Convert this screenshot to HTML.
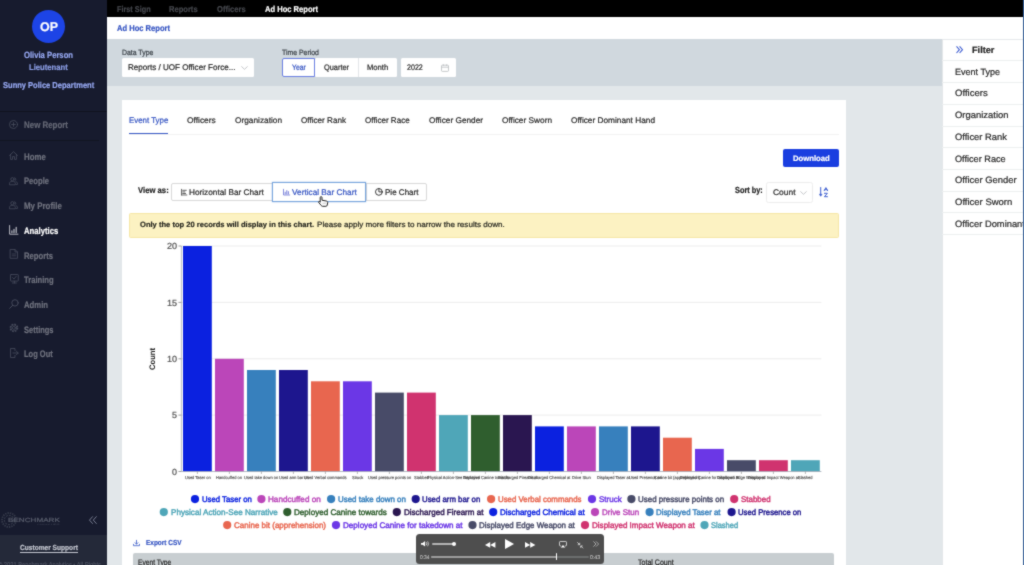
<!DOCTYPE html>
<html>
<head>
<meta charset="utf-8">
<title>Ad Hoc Report</title>
<style>
*{box-sizing:border-box;margin:0;padding:0}
html,body{width:1024px;height:565px;overflow:hidden}
body{position:relative;background:#e2e7ea;font-family:"Liberation Sans",sans-serif;font-size:8px;color:#222}
.t{position:absolute;white-space:nowrap;line-height:1;transform-origin:0 0;display:block}
.b{position:absolute}
svg{position:absolute;overflow:visible}
#side{position:absolute;left:0;top:0;width:107px;height:565px;background:#171b2e;overflow:hidden}
#top{position:absolute;left:107px;top:0;width:917px;height:17px;background:#000}
#hdr{position:absolute;left:107px;top:17px;width:917px;height:22px;background:#fff}
#band{position:absolute;left:107px;top:39px;width:835px;height:46.5px;background:#d0d8de}
#card{position:absolute;left:122px;top:100px;width:724px;height:465px;background:#fff;overflow:hidden}
#right{position:absolute;left:942px;top:39px;width:82px;height:526px;background:#fff;overflow:hidden}
#player{position:absolute;left:416px;top:534px;width:188px;height:30px;background:#4e4e4e;border-radius:3.5px;overflow:hidden}
#app{position:absolute;left:0;top:0;width:1024px;height:565px;overflow:hidden;filter:url(#soft);background:#e2e7ea}
#edge{position:absolute;left:1022.8px;top:0;width:1.2px;height:565px;background:#3f669a}
.btn{position:absolute;background:#fff;border:1px solid #d9d9d9}
</style>
</head>
<body>
<svg width="0" height="0" style="position:absolute"><defs><filter id="soft" x="0" y="0" width="100%" height="100%" color-interpolation-filters="sRGB"><feConvolveMatrix order="3" kernelMatrix="0.03 0.085 0.03 0.085 0.54 0.085 0.03 0.085 0.03" divisor="1" edgeMode="duplicate" preserveAlpha="true"/></filter></defs></svg>
<div id="app">
<!-- ============ SIDEBAR ============ -->
<nav id="side">
<div class="b" style="left:32px;top:9.5px;width:33px;height:33px;border-radius:50%;background:#1d44e6"></div>
<div class="b" style="left:0;top:111px;width:107px;height:1px;background:#10131f"></div>
<div class="b" style="left:0;top:140.2px;width:99px;height:1px;background:#111522"></div>
<div class="b" style="left:0;top:534.5px;width:107px;height:31px;background:#242939"></div>
<div class="b" style="left:19.8px;top:552.3px;width:57.9px;height:.8px;background:#c3c6cf"></div>
<svg style="left:9.2px;top:119.8px" width="9" height="9" viewBox="0 0 9 9"><circle cx="4.5" cy="4.5" r="4" fill="none" stroke="#474c5d" stroke-width="0.8" stroke-linecap="round" stroke-linejoin="round"/><path d="M4.5 2.6v3.8M2.6 4.5h3.8" fill="none" stroke="#474c5d" stroke-width="0.8" stroke-linecap="round" stroke-linejoin="round"/></svg>
<svg style="left:9.4px;top:151px" width="9" height="9" viewBox="0 0 9 9"><path d="M.6 4.4 4.5.7 8.4 4.4M1.6 3.6V8.4H3.5V5.6H5.5V8.4H7.4V3.6" fill="none" stroke="#474c5d" stroke-width="0.8" stroke-linecap="round" stroke-linejoin="round"/></svg>
<svg style="left:9.4px;top:176.6px" width="9" height="8" viewBox="0 0 9 8"><circle cx="3.4" cy="2.2" r="1.6" fill="none" stroke="#474c5d" stroke-width="0.8" stroke-linecap="round" stroke-linejoin="round"/><path d="M.5 7.4V6.3C.5 5 1.6 4.5 3.4 4.5S6.3 5 6.3 6.3V7.4Z" fill="none" stroke="#474c5d" stroke-width="0.8" stroke-linecap="round" stroke-linejoin="round"/><path d="M5.6.8A1.6 1.6 0 0 1 5.9 3.8M7 4.8C8 5 8.5 5.5 8.5 6.4V7.4H7.2" fill="none" stroke="#474c5d" stroke-width="0.8" stroke-linecap="round" stroke-linejoin="round"/></svg>
<svg style="left:9.4px;top:201.2px" width="9" height="8" viewBox="0 0 9 8"><circle cx="3.4" cy="2.2" r="1.6" fill="none" stroke="#474c5d" stroke-width="0.8" stroke-linecap="round" stroke-linejoin="round"/><path d="M.5 7.4V6.3C.5 5 1.6 4.5 3.4 4.5S6.3 5 6.3 6.3V7.4Z" fill="none" stroke="#474c5d" stroke-width="0.8" stroke-linecap="round" stroke-linejoin="round"/><path d="M5.6.8A1.6 1.6 0 0 1 5.9 3.8M7 4.8C8 5 8.5 5.5 8.5 6.4V7.4H7.2" fill="none" stroke="#474c5d" stroke-width="0.8" stroke-linecap="round" stroke-linejoin="round"/></svg>
<svg style="left:9.3px;top:224.6px" width="9.4" height="9.8" viewBox="0 0 9.4 9.8"><path d="M.6.5V9.2H9" fill="none" stroke="#c9cbd2" stroke-width="0.9" stroke-linecap="round" stroke-linejoin="round"/><path d="M2.9 7.6V5.9M5 7.6V4.2M7.2 7.6V2.2" fill="none" stroke="#c9cbd2" stroke-width="1.1" stroke-linecap="round" stroke-linejoin="round"/></svg>
<svg style="left:9.9px;top:249.2px" width="8" height="9.8" viewBox="0 0 8 9.8"><path d="M.5.5H5L7.5 3V9.3H.5Z M5 .5V3H7.5" fill="none" stroke="#474c5d" stroke-width="0.8" stroke-linecap="round" stroke-linejoin="round"/><path d="M2.2 5h3.6M2.2 6.8h3.6" fill="none" stroke="#474c5d" stroke-width="0.7" stroke-linecap="round" stroke-linejoin="round"/></svg>
<svg style="left:9.6px;top:274.4px" width="8.8" height="9.4" viewBox="0 0 8.8 9.4"><rect x=".5" y=".5" width="7.8" height="6.6" rx=".6" fill="none" stroke="#474c5d" stroke-width="0.8" stroke-linecap="round" stroke-linejoin="round"/><path d="M2.6 3.6 4 5 6.3 2.2M2.4 9h4M4.4 7.2V9" fill="none" stroke="#474c5d" stroke-width="0.8" stroke-linecap="round" stroke-linejoin="round"/></svg>
<svg style="left:9px;top:299.2px" width="10" height="10" viewBox="0 0 10 10"><circle cx="6" cy="3.9" r="3.2" fill="none" stroke="#474c5d" stroke-width="0.9" stroke-linecap="round" stroke-linejoin="round"/><path d="M3.7 6.3.7 9.3" fill="none" stroke="#474c5d" stroke-width="1" stroke-linecap="round" stroke-linejoin="round"/></svg>
<svg style="left:9px;top:323.2px" width="9.8" height="9.8" viewBox="0 0 9.8 9.8"><circle cx="4.9" cy="4.9" r="1.5" fill="none" stroke="#474c5d" stroke-width="0.8" stroke-linecap="round" stroke-linejoin="round"/><circle cx="4.9" cy="4.9" r="3.6" fill="none" stroke="#474c5d" stroke-width="1.5" stroke-dasharray="1.6 1.23"/><circle cx="4.9" cy="4.9" r="3" fill="none" stroke="#474c5d" stroke-width="0.7" stroke-linecap="round" stroke-linejoin="round"/></svg>
<svg style="left:9.7px;top:347.6px" width="8.8" height="10" viewBox="0 0 8.8 10"><path d="M5 2.6V.5H.5V9.5H5V7.4" fill="none" stroke="#474c5d" stroke-width="0.8" stroke-linecap="round" stroke-linejoin="round"/><path d="M2.8 5H8.2M6.4 3.2 8.2 5 6.4 6.8" fill="none" stroke="#474c5d" stroke-width="0.8" stroke-linecap="round" stroke-linejoin="round"/></svg>
<svg style="left:88.6px;top:516.1px" width="8.2" height="8.2" viewBox="0 0 8.2 8.2"><path d="M3.8.4.5 4.1 3.8 7.8M7.6.4 4.3 4.1 7.6 7.8" fill="none" stroke="#80859a" stroke-width=".9"/></svg>
<svg style="left:1.3px;top:511.5px" width="16" height="16" viewBox="0 0 16 16"><circle cx="8" cy="8" r="7" fill="none" stroke="#363b4b" stroke-width="1.8" stroke-dasharray="1.4 1"/><circle cx="8" cy="8" r="4.6" fill="none" stroke="#363b4b" stroke-width="1.1" stroke-dasharray="2 1"/></svg>
<span class="t" style="left:39.50px;top:20.60px;font-size:12.6px;color:#fff;font-weight:bold;-webkit-text-stroke:.2px;transform:scaleX(0.9888) skewX(.05deg);">OP</span>
<span class="t" style="left:23.90px;top:51.40px;font-size:9px;color:#97a9f3;font-weight:bold;-webkit-text-stroke:.2px;transform:scaleX(0.8517) skewX(.05deg);">Olivia Person</span>
<span class="t" style="left:29.20px;top:63.30px;font-size:8.4px;color:#8c9ee6;font-weight:bold;-webkit-text-stroke:.2px;transform:scaleX(0.9163) skewX(.05deg);">Lieutenant</span>
<span class="t" style="left:3.00px;top:81.00px;font-size:8.6px;color:#97a9f3;font-weight:bold;-webkit-text-stroke:.2px;transform:scaleX(0.8760) skewX(.05deg);">Sunny Police Department</span>
<span class="t" style="left:24.00px;top:120.20px;font-size:9.4px;color:#666976;font-weight:bold;-webkit-text-stroke:.2px;transform:scaleX(0.8446) skewX(.05deg);">New Report</span>
<span class="t" style="left:24.00px;top:151.80px;font-size:9.4px;color:#70737f;font-weight:bold;-webkit-text-stroke:.2px;transform:scaleX(0.8370) skewX(.05deg);">Home</span>
<span class="t" style="left:24.00px;top:176.48px;font-size:9.4px;color:#70737f;font-weight:bold;-webkit-text-stroke:.2px;transform:scaleX(0.8130) skewX(.05deg);">People</span>
<span class="t" style="left:24.00px;top:201.16px;font-size:9.4px;color:#70737f;font-weight:bold;-webkit-text-stroke:.2px;transform:scaleX(0.8457) skewX(.05deg);">My Profile</span>
<span class="t" style="left:24.00px;top:225.84px;font-size:9.4px;color:#fff;font-weight:bold;-webkit-text-stroke:.2px;transform:scaleX(0.8204) skewX(.05deg);">Analytics</span>
<span class="t" style="left:24.00px;top:250.52px;font-size:9.4px;color:#70737f;font-weight:bold;-webkit-text-stroke:.2px;transform:scaleX(0.8187) skewX(.05deg);">Reports</span>
<span class="t" style="left:24.00px;top:275.20px;font-size:9.4px;color:#70737f;font-weight:bold;-webkit-text-stroke:.2px;transform:scaleX(0.8144) skewX(.05deg);">Training</span>
<span class="t" style="left:24.00px;top:299.88px;font-size:9.4px;color:#70737f;font-weight:bold;-webkit-text-stroke:.2px;transform:scaleX(0.8227) skewX(.05deg);">Admin</span>
<span class="t" style="left:24.00px;top:324.56px;font-size:9.4px;color:#70737f;font-weight:bold;-webkit-text-stroke:.2px;transform:scaleX(0.7976) skewX(.05deg);">Settings</span>
<span class="t" style="left:24.00px;top:349.24px;font-size:9.4px;color:#70737f;font-weight:bold;-webkit-text-stroke:.2px;transform:scaleX(0.7986) skewX(.05deg);">Log Out</span>
<span class="t" style="left:8.00px;top:516.60px;font-size:6px;color:#585d6c;-webkit-text-stroke:.22px;transform:scaleX(1.3509) skewX(.05deg);">BENCHMARK</span>
<span class="t" style="left:36.80px;top:522.60px;font-size:2px;color:#474c5c;transform:scaleX(2.0513) skewX(.05deg);">ANALYTICS</span>
<span class="t" style="left:19.80px;top:544.30px;font-size:7.4px;color:#c3c6cf;font-weight:bold;-webkit-text-stroke:.2px;transform:scaleX(0.8925) skewX(.05deg);">Customer Support</span>
<span class="t" style="left:-2.00px;top:561.30px;font-size:7px;color:#4d5262;-webkit-text-stroke:.22px;transform:scaleX(0.8232) skewX(.05deg);">© 2021 Benchmark Analytics • All Rights</span>
</nav>
<!-- ============ TOP BAR ============ -->
<div id="top">
<span class="t" style="left:9.80px;top:4.50px;font-size:8.5px;color:#46484e;font-weight:bold;-webkit-text-stroke:.2px;transform:scaleX(0.8571) skewX(.05deg);">First Sign</span>
<span class="t" style="left:62.30px;top:4.50px;font-size:8.5px;color:#46484e;font-weight:bold;-webkit-text-stroke:.2px;transform:scaleX(0.8903) skewX(.05deg);">Reports</span>
<span class="t" style="left:110.10px;top:4.50px;font-size:8.5px;color:#46484e;font-weight:bold;-webkit-text-stroke:.2px;transform:scaleX(0.8903) skewX(.05deg);">Officers</span>
<span class="t" style="left:157.70px;top:4.50px;font-size:8.5px;color:#fff;font-weight:bold;-webkit-text-stroke:.2px;transform:scaleX(0.8908) skewX(.05deg);">Ad Hoc Report</span>
</div>
<div id="hdr">
<span class="t" style="left:9.80px;top:7.40px;font-size:8.5px;color:#3554c2;font-weight:bold;-webkit-text-stroke:.2px;transform:scaleX(0.8908) skewX(.05deg);">Ad Hoc Report</span>
</div>
<!-- ============ FILTER BAND ============ -->
<div id="band">
<div class="b" style="left:14.6px;top:19px;width:132px;height:18.7px;background:#fff;border-radius:1.5px"></div>
<svg style="left:133.8px;top:27.2px" width="7" height="4" viewBox="0 0 7 4"><path d="M.4.4 3.5 3.3 6.6.4" fill="none" stroke="#b5b8bb" stroke-width=".8"/></svg>
<div class="b" style="left:207.6px;top:19.4px;width:82.4px;height:18.4px;background:#fff;border-radius:1.5px"></div>
<div class="b" style="left:251.3px;top:19.4px;width:1px;height:18.4px;background:#e3e6e8"></div>
<div class="b" style="left:175.1px;top:19.2px;width:33px;height:18.8px;background:#fff;border:1px solid #6b80e2;border-radius:2px 0 0 2px"></div>
<div class="b" style="left:293.5px;top:19.4px;width:55px;height:18.4px;background:#fff;border-radius:1.5px"></div>
<svg style="left:334.4px;top:24.6px" width="8" height="8" viewBox="0 0 8 8"><rect x=".5" y="1.2" width="7" height="6.2" rx=".8" fill="none" stroke="#b9bcbf" stroke-width=".8"/><path d="M.5 3.2h7M2.3.3v1.6M5.7.3v1.6" stroke="#b9bcbf" stroke-width=".8" fill="none"/></svg>
<span class="t" style="left:14.60px;top:9.60px;font-size:7.6px;color:#3a4047;-webkit-text-stroke:.22px;transform:scaleX(0.9077) skewX(.05deg);">Data Type</span>
<span class="t" style="left:21.10px;top:24.80px;font-size:8.2px;color:#2a2a2a;-webkit-text-stroke:.22px;transform:scaleX(0.9849) skewX(.05deg);">Reports / UOF Officer Force...</span>
<span class="t" style="left:175.30px;top:9.60px;font-size:7.6px;color:#3a4047;-webkit-text-stroke:.22px;transform:scaleX(0.9076) skewX(.05deg);">Time Period</span>
<span class="t" style="left:184.50px;top:24.80px;font-size:8px;color:#3554c2;-webkit-text-stroke:.22px;transform:scaleX(0.8595) skewX(.05deg);">Year</span>
<span class="t" style="left:216.70px;top:24.80px;font-size:8px;color:#2a2a2a;-webkit-text-stroke:.22px;transform:scaleX(0.9217) skewX(.05deg);">Quarter</span>
<span class="t" style="left:260.00px;top:24.80px;font-size:8px;color:#2a2a2a;-webkit-text-stroke:.22px;transform:scaleX(0.9535) skewX(.05deg);">Month</span>
<span class="t" style="left:300.10px;top:24.80px;font-size:8px;color:#2a2a2a;-webkit-text-stroke:.22px;transform:scaleX(0.8878) skewX(.05deg);">2022</span>
</div>
<!-- ============ MAIN CARD ============ -->
<main id="card">
<div class="b" style="left:7px;top:33.6px;width:710px;height:1px;background:#f2f2f2"></div>
<div class="b" style="left:6.8px;top:32.8px;width:39.3px;height:1.7px;background:#3a5ac6"></div>
<div class="b" style="left:661.2px;top:48.8px;width:55.7px;height:18.6px;background:#1a3ee0;border-radius:2px"></div>
<!-- view as -->
<div class="btn" style="left:49.3px;top:82.5px;width:256.2px;height:18.8px;border-radius:2px"></div>
<div class="b" style="left:244.3px;top:82.5px;width:1px;height:18.8px;background:#d9d9d9"></div>
<div class="btn" style="left:150.4px;top:82.4px;width:94px;height:19.3px;border-color:#78a5dd;box-shadow:0 0 1.5px rgba(80,140,215,.5)"></div>
<svg style="left:59.19999999999999px;top:88.80000000000001px" width="6.2" height="6.4" viewBox="0 0 6.2 6.4"><path d="M.5.3V6M.5 6H5.9" fill="none" stroke="#5a5a5a" stroke-width="0.9" stroke-linecap="round" stroke-linejoin="round"/><path d="M1.7 1.3H5.3M1.7 2.9H3.9M1.7 4.5H4.6" fill="none" stroke="#5a5a5a" stroke-width="0.95" stroke-linecap="round" stroke-linejoin="round"/></svg>
<svg style="left:160.60000000000002px;top:88.80000000000001px" width="7" height="6.4" viewBox="0 0 7 6.4"><path d="M.5.3V6H6.7" fill="none" stroke="#6a73d6" stroke-width="0.8" stroke-linecap="round" stroke-linejoin="round"/><path d="M2.2 5V3.2M3.8 5V1.6M5.4 5V2.6" fill="none" stroke="#6a73d6" stroke-width="0.9" stroke-linecap="round" stroke-linejoin="round"/></svg>
<svg style="left:252.89999999999998px;top:88.30000000000001px" width="7.8" height="7.8" viewBox="0 0 7.8 7.8"><circle cx="3.9" cy="3.9" r="3.4" fill="none" stroke="#3c3c3c" stroke-width="1" stroke-linecap="round" stroke-linejoin="round"/><path d="M3.9.5V3.9H7.3" fill="none" stroke="#3c3c3c" stroke-width="1" stroke-linecap="round" stroke-linejoin="round"/></svg>
<!-- sort -->
<div class="btn" style="left:644px;top:82px;width:47px;height:20.8px;border-color:#ededed;border-radius:2.5px"></div>
<svg style="left:678px;top:90.8px" width="7" height="4" viewBox="0 0 7 4"><path d="M.4.4 3.5 3.3 6.6.4" fill="none" stroke="#b5b8bb" stroke-width=".8"/></svg>
<svg style="left:697.3px;top:86.80000000000001px" width="9.4" height="10.4" viewBox="0 0 9.4 10.4"><path d="M1.7.5V8.4" fill="none" stroke="#3f5fd0" stroke-width="1" stroke-linecap="round" stroke-linejoin="round"/><path d="M.3 7.2 1.7 9.3 3.1 7.2Z" fill="#3f5fd0" stroke="#3f5fd0" stroke-width=".5"/><path d="M5.2 3.7 6.9.6 8.6 3.7M5.8 2.7H8" fill="none" stroke="#3f5fd0" stroke-width="1" stroke-linecap="round" stroke-linejoin="round"/><path d="M5.4 6.3H8.4L5.4 9.7H8.5" fill="none" stroke="#3f5fd0" stroke-width="1" stroke-linecap="round" stroke-linejoin="round"/></svg>
<!-- alert -->
<div class="b" style="left:6.8px;top:113px;width:710.1px;height:24.5px;background:#fcf2c2;border:1px solid #f6e7a6;border-radius:1.5px"></div>
<svg style="left:0;top:0" width="724" height="465" viewBox="122 100 724 465">
<path d="M181.4 415.1H821.4" stroke="#ececec" stroke-width="1"/>
<path d="M181.4 358.8H821.4" stroke="#ececec" stroke-width="1"/>
<path d="M181.4 302.4H821.4" stroke="#ececec" stroke-width="1"/>
<path d="M181.4 246.0H821.4" stroke="#ececec" stroke-width="1"/>
<rect x="183.0" y="246.0" width="28.8" height="225.5" fill="#0b21e0"/>
<rect x="215.0" y="358.8" width="28.8" height="112.8" fill="#bb46b9"/>
<rect x="247.0" y="370.0" width="28.8" height="101.5" fill="#3780bd"/>
<rect x="279.0" y="370.0" width="28.8" height="101.5" fill="#1d168e"/>
<rect x="311.0" y="381.3" width="28.8" height="90.2" fill="#e8664f"/>
<rect x="343.0" y="381.3" width="28.8" height="90.2" fill="#6b37e6"/>
<rect x="375.0" y="392.6" width="28.8" height="78.9" fill="#484b68"/>
<rect x="407.0" y="392.6" width="28.8" height="78.9" fill="#d0336f"/>
<rect x="439.0" y="415.1" width="28.8" height="56.4" fill="#4fa6b8"/>
<rect x="471.0" y="415.1" width="28.8" height="56.4" fill="#2f5e2e"/>
<rect x="503.0" y="415.1" width="28.8" height="56.4" fill="#2a1650"/>
<rect x="535.0" y="426.4" width="28.8" height="45.1" fill="#0b21e0"/>
<rect x="567.0" y="426.4" width="28.8" height="45.1" fill="#bb46b9"/>
<rect x="599.0" y="426.4" width="28.8" height="45.1" fill="#3780bd"/>
<rect x="631.0" y="426.4" width="28.8" height="45.1" fill="#1d168e"/>
<rect x="663.0" y="437.7" width="28.8" height="33.8" fill="#e8664f"/>
<rect x="695.0" y="448.9" width="28.8" height="22.6" fill="#6b37e6"/>
<rect x="727.0" y="460.2" width="28.8" height="11.3" fill="#484b68"/>
<rect x="759.0" y="460.2" width="28.8" height="11.3" fill="#d0336f"/>
<rect x="791.0" y="460.2" width="28.8" height="11.3" fill="#4fa6b8"/>
<path d="M181.4 246.0V471.5H821.4" fill="none" stroke="#a3a9b5" stroke-width=".8"/>
<path d="M178.4 471.5H181.4" stroke="#8a8a8a" stroke-width=".8"/>
<path d="M178.4 415.1H181.4" stroke="#8a8a8a" stroke-width=".8"/>
<path d="M178.4 358.8H181.4" stroke="#8a8a8a" stroke-width=".8"/>
<path d="M178.4 302.4H181.4" stroke="#8a8a8a" stroke-width=".8"/>
<path d="M178.4 246.0H181.4" stroke="#8a8a8a" stroke-width=".8"/>
<path d="M197.4 471.5v2.5" stroke="#8a8a8a" stroke-width=".6"/>
<path d="M229.4 471.5v2.5" stroke="#8a8a8a" stroke-width=".6"/>
<path d="M261.4 471.5v2.5" stroke="#8a8a8a" stroke-width=".6"/>
<path d="M293.4 471.5v2.5" stroke="#8a8a8a" stroke-width=".6"/>
<path d="M325.4 471.5v2.5" stroke="#8a8a8a" stroke-width=".6"/>
<path d="M357.4 471.5v2.5" stroke="#8a8a8a" stroke-width=".6"/>
<path d="M389.4 471.5v2.5" stroke="#8a8a8a" stroke-width=".6"/>
<path d="M421.4 471.5v2.5" stroke="#8a8a8a" stroke-width=".6"/>
<path d="M453.4 471.5v2.5" stroke="#8a8a8a" stroke-width=".6"/>
<path d="M485.4 471.5v2.5" stroke="#8a8a8a" stroke-width=".6"/>
<path d="M517.4 471.5v2.5" stroke="#8a8a8a" stroke-width=".6"/>
<path d="M549.4 471.5v2.5" stroke="#8a8a8a" stroke-width=".6"/>
<path d="M581.4 471.5v2.5" stroke="#8a8a8a" stroke-width=".6"/>
<path d="M613.4 471.5v2.5" stroke="#8a8a8a" stroke-width=".6"/>
<path d="M645.4 471.5v2.5" stroke="#8a8a8a" stroke-width=".6"/>
<path d="M677.4 471.5v2.5" stroke="#8a8a8a" stroke-width=".6"/>
<path d="M709.4 471.5v2.5" stroke="#8a8a8a" stroke-width=".6"/>
<path d="M741.4 471.5v2.5" stroke="#8a8a8a" stroke-width=".6"/>
<path d="M773.4 471.5v2.5" stroke="#8a8a8a" stroke-width=".6"/>
<path d="M805.4 471.5v2.5" stroke="#8a8a8a" stroke-width=".6"/>
<circle cx="195" cy="499.1" r="4.1" fill="#0b21e0"/>
<circle cx="261.4" cy="499.1" r="4.1" fill="#bb46b9"/>
<circle cx="331.1" cy="499.1" r="4.1" fill="#3780bd"/>
<circle cx="415.7" cy="499.1" r="4.1" fill="#1d168e"/>
<circle cx="491.1" cy="499.1" r="4.1" fill="#e8664f"/>
<circle cx="592" cy="499.1" r="4.1" fill="#6b37e6"/>
<circle cx="631.4" cy="499.1" r="4.1" fill="#484b68"/>
<circle cx="734.2" cy="499.1" r="4.1" fill="#d0336f"/>
<circle cx="163.8" cy="512.1" r="4.1" fill="#4fa6b8"/>
<circle cx="287.3" cy="512.1" r="4.1" fill="#2f5e2e"/>
<circle cx="396.8" cy="512.1" r="4.1" fill="#2a1650"/>
<circle cx="493.2" cy="512.1" r="4.1" fill="#0b21e0"/>
<circle cx="595" cy="512.1" r="4.1" fill="#bb46b9"/>
<circle cx="649.6" cy="512.1" r="4.1" fill="#3780bd"/>
<circle cx="731.6" cy="512.1" r="4.1" fill="#1d168e"/>
<circle cx="227.2" cy="525.1" r="4.1" fill="#e8664f"/>
<circle cx="336" cy="525.1" r="4.1" fill="#6b37e6"/>
<circle cx="472.5" cy="525.1" r="4.1" fill="#484b68"/>
<circle cx="585" cy="525.1" r="4.1" fill="#d0336f"/>
<circle cx="704.5" cy="525.1" r="4.1" fill="#4fa6b8"/>
</svg>
<svg style="left:11.400000000000006px;top:440px" width="7" height="6.2" viewBox="0 0 7 6.2"><path d="M3.5.3V3.9M2 2.7 3.5 4.2 5 2.7" fill="none" stroke="#3a5ac6" stroke-width="0.8" stroke-linecap="round" stroke-linejoin="round"/><path d="M.5 4.3V5.7H6.5V4.3" fill="none" stroke="#3a5ac6" stroke-width="0.8" stroke-linecap="round" stroke-linejoin="round"/></svg>
<div class="b" style="left:11.2px;top:452.5px;width:701.2px;height:13px;background:#c8ced1;border-radius:2px 2px 0 0"></div>
<span class="t" style="left:6.80px;top:17.20px;font-size:8.2px;color:#3554c2;-webkit-text-stroke:.22px;transform:scaleX(0.9626) skewX(.05deg);">Event Type</span>
<span class="t" style="left:65.30px;top:17.20px;font-size:8.2px;color:#2c2c2c;-webkit-text-stroke:.22px;transform:scaleX(1.0227) skewX(.05deg);">Officers</span>
<span class="t" style="left:113.10px;top:17.20px;font-size:8.2px;color:#2c2c2c;-webkit-text-stroke:.22px;transform:scaleX(1.0143) skewX(.05deg);">Organization</span>
<span class="t" style="left:179.30px;top:17.20px;font-size:8.2px;color:#2c2c2c;-webkit-text-stroke:.22px;transform:scaleX(0.9943) skewX(.05deg);">Officer Rank</span>
<span class="t" style="left:243.30px;top:17.20px;font-size:8.2px;color:#2c2c2c;-webkit-text-stroke:.22px;transform:scaleX(0.9855) skewX(.05deg);">Officer Race</span>
<span class="t" style="left:306.80px;top:17.20px;font-size:8.2px;color:#2c2c2c;-webkit-text-stroke:.22px;transform:scaleX(1.0085) skewX(.05deg);">Officer Gender</span>
<span class="t" style="left:380.20px;top:17.20px;font-size:8.2px;color:#2c2c2c;-webkit-text-stroke:.22px;transform:scaleX(1.0111) skewX(.05deg);">Officer Sworn</span>
<span class="t" style="left:449.30px;top:17.20px;font-size:8.2px;color:#2c2c2c;-webkit-text-stroke:.22px;transform:scaleX(1.0103) skewX(.05deg);">Officer Dominant Hand</span>
<span class="t" style="left:670.70px;top:54.90px;font-size:8px;color:#fff;font-weight:bold;-webkit-text-stroke:.2px;transform:scaleX(0.9603) skewX(.05deg);">Download</span>
<span class="t" style="left:16.10px;top:86.20px;font-size:8.4px;color:#222;font-weight:bold;-webkit-text-stroke:.2px;transform:scaleX(0.9199) skewX(.05deg);">View as:</span>
<span class="t" style="left:67.10px;top:88.70px;font-size:8.2px;color:#2a2a2a;-webkit-text-stroke:.22px;transform:scaleX(1.0071) skewX(.05deg);">Horizontal Bar Chart</span>
<span class="t" style="left:170.20px;top:88.70px;font-size:8.2px;color:#3554c2;-webkit-text-stroke:.22px;transform:scaleX(1.0082) skewX(.05deg);">Vertical Bar Chart</span>
<span class="t" style="left:263.30px;top:88.70px;font-size:8.2px;color:#2a2a2a;-webkit-text-stroke:.22px;transform:scaleX(0.9812) skewX(.05deg);">Pie Chart</span>
<span class="t" style="left:613.40px;top:86.40px;font-size:8.8px;color:#222;font-weight:bold;-webkit-text-stroke:.2px;transform:scaleX(0.8365) skewX(.05deg);">Sort by:</span>
<span class="t" style="left:651.10px;top:88.90px;font-size:8.2px;color:#2a2a2a;-webkit-text-stroke:.22px;transform:scaleX(1.0293) skewX(.05deg);">Count</span>
<span class="t" style="left:17.70px;top:121.20px;font-size:7.6px;color:#2a2a22;font-weight:bold;-webkit-text-stroke:.2px;transform:scaleX(0.9965) skewX(.05deg);">Only the top 20 records will display in this chart.</span>
<span class="t" style="left:194.60px;top:121.20px;font-size:7.6px;color:#2a2a22;-webkit-text-stroke:.22px;transform:scaleX(1.0644) skewX(.05deg);">Please apply more filters to narrow the results down.</span>
<span class="t" style="left:79.60px;top:395.80px;font-size:8.2px;color:#0b21e0;-webkit-text-stroke:.22px;transform:scaleX(0.9458) skewX(.05deg);-webkit-text-stroke:.42px;">Used Taser on</span>
<span class="t" style="left:146.00px;top:395.80px;font-size:8.2px;color:#bb46b9;-webkit-text-stroke:.22px;transform:scaleX(0.9920) skewX(.05deg);-webkit-text-stroke:.42px;">Handcuffed on</span>
<span class="t" style="left:215.80px;top:395.80px;font-size:8.2px;color:#3780bd;-webkit-text-stroke:.22px;transform:scaleX(0.9687) skewX(.05deg);-webkit-text-stroke:.42px;">Used take down on</span>
<span class="t" style="left:300.40px;top:395.80px;font-size:8.2px;color:#1d168e;-webkit-text-stroke:.22px;transform:scaleX(0.9560) skewX(.05deg);-webkit-text-stroke:.42px;">Used arm bar on</span>
<span class="t" style="left:375.80px;top:395.80px;font-size:8.2px;color:#e8664f;-webkit-text-stroke:.22px;transform:scaleX(0.9606) skewX(.05deg);-webkit-text-stroke:.42px;">Used Verbal commands</span>
<span class="t" style="left:476.70px;top:395.80px;font-size:8.2px;color:#6b37e6;-webkit-text-stroke:.22px;transform:scaleX(0.9777) skewX(.05deg);-webkit-text-stroke:.42px;">Struck</span>
<span class="t" style="left:516.40px;top:395.80px;font-size:8.2px;color:#484b68;-webkit-text-stroke:.22px;transform:scaleX(0.9701) skewX(.05deg);-webkit-text-stroke:.42px;">Used pressure points on</span>
<span class="t" style="left:618.90px;top:395.80px;font-size:8.2px;color:#d0336f;-webkit-text-stroke:.22px;transform:scaleX(0.9700) skewX(.05deg);-webkit-text-stroke:.42px;">Stabbed</span>
<span class="t" style="left:48.50px;top:408.80px;font-size:8.2px;color:#4fa6b8;-webkit-text-stroke:.22px;transform:scaleX(0.9902) skewX(.05deg);-webkit-text-stroke:.42px;">Physical Action-See Narrative</span>
<span class="t" style="left:172.00px;top:408.80px;font-size:8.2px;color:#2f5e2e;-webkit-text-stroke:.22px;transform:scaleX(0.9897) skewX(.05deg);-webkit-text-stroke:.42px;">Deployed Canine towards</span>
<span class="t" style="left:281.50px;top:408.80px;font-size:8.2px;color:#2a1650;-webkit-text-stroke:.22px;transform:scaleX(0.9802) skewX(.05deg);-webkit-text-stroke:.42px;">Discharged Firearm at</span>
<span class="t" style="left:378.00px;top:408.80px;font-size:8.2px;color:#0b21e0;-webkit-text-stroke:.22px;transform:scaleX(0.9733) skewX(.05deg);-webkit-text-stroke:.42px;">Discharged Chemical at</span>
<span class="t" style="left:479.70px;top:408.80px;font-size:8.2px;color:#bb46b9;-webkit-text-stroke:.22px;transform:scaleX(0.9703) skewX(.05deg);-webkit-text-stroke:.42px;">Drive Stun</span>
<span class="t" style="left:534.30px;top:408.80px;font-size:8.2px;color:#3780bd;-webkit-text-stroke:.22px;transform:scaleX(0.9598) skewX(.05deg);-webkit-text-stroke:.42px;">Displayed Taser at</span>
<span class="t" style="left:616.30px;top:408.80px;font-size:8.2px;color:#1d168e;-webkit-text-stroke:.22px;transform:scaleX(0.9412) skewX(.05deg);-webkit-text-stroke:.42px;">Used Presence on</span>
<span class="t" style="left:111.90px;top:421.80px;font-size:8.2px;color:#e8664f;-webkit-text-stroke:.22px;transform:scaleX(0.9765) skewX(.05deg);-webkit-text-stroke:.42px;">Canine bit (apprehension)</span>
<span class="t" style="left:220.60px;top:421.80px;font-size:8.2px;color:#6b37e6;-webkit-text-stroke:.22px;transform:scaleX(0.9870) skewX(.05deg);-webkit-text-stroke:.42px;">Deployed Canine for takedown at</span>
<span class="t" style="left:357.20px;top:421.80px;font-size:8.2px;color:#484b68;-webkit-text-stroke:.22px;transform:scaleX(0.9669) skewX(.05deg);-webkit-text-stroke:.42px;">Displayed Edge Weapon at</span>
<span class="t" style="left:469.70px;top:421.80px;font-size:8.2px;color:#d0336f;-webkit-text-stroke:.22px;transform:scaleX(0.9834) skewX(.05deg);-webkit-text-stroke:.42px;">Displayed Impact Weapon at</span>
<span class="t" style="left:589.20px;top:421.80px;font-size:8.2px;color:#4fa6b8;-webkit-text-stroke:.22px;transform:scaleX(0.9157) skewX(.05deg);-webkit-text-stroke:.42px;">Slashed</span>
<span class="t" style="left:23.80px;top:439.30px;font-size:7.3px;color:#3554c2;font-weight:bold;-webkit-text-stroke:.2px;transform:scaleX(0.8869) skewX(.05deg);">Export CSV</span>
<span class="t" style="left:15.80px;top:459.00px;font-size:8px;color:#2a2a2a;-webkit-text-stroke:.22px;transform:scaleX(0.8348) skewX(.05deg);">Event Type</span>
<span class="t" style="left:515.70px;top:459.00px;font-size:8px;color:#2a2a2a;-webkit-text-stroke:.22px;transform:scaleX(0.8797) skewX(.05deg);">Total Count</span>
<span class="t" style="left:50.10px;top:367.70px;font-size:8.8px;color:#555;-webkit-text-stroke:.22px;transform:scaleX(1.0191) skewX(.05deg);">0</span>
<span class="t" style="left:50.10px;top:311.32px;font-size:8.8px;color:#555;-webkit-text-stroke:.22px;transform:scaleX(1.0191) skewX(.05deg);">5</span>
<span class="t" style="left:45.00px;top:254.95px;font-size:8.8px;color:#555;-webkit-text-stroke:.22px;transform:scaleX(1.0309) skewX(.05deg);">10</span>
<span class="t" style="left:45.00px;top:198.57px;font-size:8.8px;color:#555;-webkit-text-stroke:.22px;transform:scaleX(1.0309) skewX(.05deg);">15</span>
<span class="t" style="left:45.00px;top:142.20px;font-size:8.8px;color:#555;-webkit-text-stroke:.22px;transform:scaleX(1.0309) skewX(.05deg);">20</span>
<span class="t" style="left:30.6px;top:258.8px;font-size:8px;font-weight:bold;color:#222;transform-origin:50% 50%;transform:translate(-50%,-50%) rotate(-90.05deg) scaleX(0.9520)">Count</span>
<span class="t" style="left:62.55px;top:376.40px;font-size:4.3px;color:#555;transform:scaleX(0.9300) skewX(.05deg);-webkit-text-stroke:.16px;">Used Taser on</span>
<span class="t" style="left:94.44px;top:376.40px;font-size:4.3px;color:#555;transform:scaleX(0.9300) skewX(.05deg);-webkit-text-stroke:.16px;">Handcuffed on</span>
<span class="t" style="left:122.29px;top:376.40px;font-size:4.3px;color:#555;transform:scaleX(0.9300) skewX(.05deg);-webkit-text-stroke:.16px;">Used take down on</span>
<span class="t" style="left:156.51px;top:376.40px;font-size:4.3px;color:#555;transform:scaleX(0.9300) skewX(.05deg);-webkit-text-stroke:.16px;">Used arm bar on</span>
<span class="t" style="left:182.18px;top:376.40px;font-size:4.3px;color:#555;transform:scaleX(0.9300) skewX(.05deg);-webkit-text-stroke:.16px;">Used Verbal commands</span>
<span class="t" style="left:229.73px;top:376.40px;font-size:4.3px;color:#555;transform:scaleX(0.9300) skewX(.05deg);-webkit-text-stroke:.16px;">Struck</span>
<span class="t" style="left:245.74px;top:376.40px;font-size:4.3px;color:#555;transform:scaleX(0.9300) skewX(.05deg);-webkit-text-stroke:.16px;">Used pressure points on</span>
<span class="t" style="left:291.95px;top:376.40px;font-size:4.3px;color:#555;transform:scaleX(0.9300) skewX(.05deg);-webkit-text-stroke:.16px;">Stabbed</span>
<span class="t" style="left:305.08px;top:376.40px;font-size:4.3px;color:#555;transform:scaleX(0.9300) skewX(.05deg);-webkit-text-stroke:.16px;">Physical Action-See Narrative</span>
<span class="t" style="left:340.51px;top:376.40px;font-size:4.3px;color:#555;transform:scaleX(0.9300) skewX(.05deg);-webkit-text-stroke:.16px;">Deployed Canine towards</span>
<span class="t" style="left:375.63px;top:376.40px;font-size:4.3px;color:#555;transform:scaleX(0.9300) skewX(.05deg);-webkit-text-stroke:.16px;">Discharged Firearm at</span>
<span class="t" style="left:406.18px;top:376.40px;font-size:4.3px;color:#555;transform:scaleX(0.9300) skewX(.05deg);-webkit-text-stroke:.16px;">Discharged Chemical at</span>
<span class="t" style="left:450.07px;top:376.40px;font-size:4.3px;color:#555;transform:scaleX(0.9300) skewX(.05deg);-webkit-text-stroke:.16px;">Drive Stun</span>
<span class="t" style="left:474.99px;top:376.40px;font-size:4.3px;color:#555;transform:scaleX(0.9300) skewX(.05deg);-webkit-text-stroke:.16px;">Displayed Taser at</span>
<span class="t" style="left:506.96px;top:376.40px;font-size:4.3px;color:#555;transform:scaleX(0.9300) skewX(.05deg);-webkit-text-stroke:.16px;">Used Presence on</span>
<span class="t" style="left:532.40px;top:376.40px;font-size:4.3px;color:#555;transform:scaleX(0.9300) skewX(.05deg);-webkit-text-stroke:.16px;">Canine bit (apprehension)</span>
<span class="t" style="left:557.85px;top:376.40px;font-size:4.3px;color:#555;transform:scaleX(0.9300) skewX(.05deg);-webkit-text-stroke:.16px;">Deployed Canine for takedown at</span>
<span class="t" style="left:595.22px;top:376.40px;font-size:4.3px;color:#555;transform:scaleX(0.9300) skewX(.05deg);-webkit-text-stroke:.16px;">Displayed Edge Weapon at</span>
<span class="t" style="left:625.89px;top:376.40px;font-size:4.3px;color:#555;transform:scaleX(0.9300) skewX(.05deg);-webkit-text-stroke:.16px;">Displayed Impact Weapon at</span>
<span class="t" style="left:676.18px;top:376.40px;font-size:4.3px;color:#555;transform:scaleX(0.9300) skewX(.05deg);-webkit-text-stroke:.16px;">Slashed</span>
<svg style="left:196px;top:96.0px" width="10.4" height="10.8" viewBox="0 0 10.4 10.8"><path d="M3 .6C3.7.6 4 1 4 1.6V4.2L8.3 5C9.3 5.2 9.8 5.8 9.7 6.8L9.2 9.2C9.1 9.9 8.6 10.3 7.9 10.3H4.6C4 10.3 3.6 10 3.2 9.5L.6 6.3C.3 5.8.9 5.2 1.5 5.6L2.2 6.2V1.6C2.2 1 2.4.6 3 .6Z" fill="#fff" stroke="#222" stroke-width="1" stroke-linejoin="round"/><path d="M4.4 7.2H8.2" stroke="#bbb" stroke-width=".8" fill="none"/></svg>
</main>
<!-- ============ RIGHT FILTER PANEL ============ -->
<aside id="right">
<div class="b" style="left:0;top:0;width:82px;height:1px;background:#e6e9eb"></div>
<div class="b" style="left:0;top:0;width:1px;height:526px;background:#e3e6e8"></div>
<svg style="left:13.6px;top:6.6px" width="7.2" height="7.4" viewBox="0 0 7.2 7.4"><path d="M.5.4 3.4 3.7.5 7M3.6.4 6.5 3.7 3.6 7" fill="none" stroke="#4261d2" stroke-width="1.1"/></svg>
<div class="b" style="left:0;top:20.9px;width:82px;height:1px;background:#eceff0"></div>
<div class="b" style="left:0;top:43.1px;width:82px;height:1px;background:#eceff0"></div>
<div class="b" style="left:0;top:64.8px;width:82px;height:1px;background:#eceff0"></div>
<div class="b" style="left:0;top:86.5px;width:82px;height:1px;background:#eceff0"></div>
<div class="b" style="left:0;top:108.2px;width:82px;height:1px;background:#eceff0"></div>
<div class="b" style="left:0;top:129.9px;width:82px;height:1px;background:#eceff0"></div>
<div class="b" style="left:0;top:151.6px;width:82px;height:1px;background:#eceff0"></div>
<div class="b" style="left:0;top:173.3px;width:82px;height:1px;background:#eceff0"></div>
<div class="b" style="left:0;top:195.0px;width:82px;height:1px;background:#eceff0"></div>
<span class="t" style="left:30.30px;top:6.90px;font-size:9.2px;color:#222;font-weight:bold;-webkit-text-stroke:.2px;transform:scaleX(0.9969) skewX(.05deg);">Filter</span>
<span class="t" style="left:12.70px;top:28.70px;font-size:9.2px;color:#2a2a2a;-webkit-text-stroke:.22px;transform:scaleX(0.9823) skewX(.05deg);">Event Type</span>
<span class="t" style="left:12.70px;top:50.40px;font-size:9.2px;color:#2a2a2a;-webkit-text-stroke:.22px;transform:scaleX(1.0386) skewX(.05deg);">Officers</span>
<span class="t" style="left:12.70px;top:72.10px;font-size:9.2px;color:#2a2a2a;-webkit-text-stroke:.22px;transform:scaleX(1.0270) skewX(.05deg);">Organization</span>
<span class="t" style="left:12.70px;top:93.80px;font-size:9.2px;color:#2a2a2a;-webkit-text-stroke:.22px;transform:scaleX(1.0179) skewX(.05deg);">Officer Rank</span>
<span class="t" style="left:12.70px;top:115.50px;font-size:9.2px;color:#2a2a2a;-webkit-text-stroke:.22px;transform:scaleX(0.9943) skewX(.05deg);">Officer Race</span>
<span class="t" style="left:12.70px;top:137.20px;font-size:9.2px;color:#2a2a2a;-webkit-text-stroke:.22px;transform:scaleX(1.0251) skewX(.05deg);">Officer Gender</span>
<span class="t" style="left:12.70px;top:158.90px;font-size:9.2px;color:#2a2a2a;-webkit-text-stroke:.22px;transform:scaleX(1.0327) skewX(.05deg);">Officer Sworn</span>
<span class="t" style="left:12.70px;top:180.60px;font-size:9.2px;color:#2a2a2a;-webkit-text-stroke:.22px;transform:scaleX(1.0163) skewX(.05deg);">Officer Dominant Hand</span>
</aside>
<!-- ============ VIDEO PLAYER OVERLAY ============ -->
<div id="player">
<svg style="left:4.600000000000023px;top:7.2000000000000455px" width="9.2" height="5.6" viewBox="0 0 9.2 5.6"><path d="M0 1.9H1.6L4.1 0V5.6L1.6 3.7H0Z" fill="#fff"/><path d="M5.3 1.3A2.2 2.2 0 0 1 5.3 4.3" fill="none" stroke="#fff" stroke-width=".8"/><path d="M6.6.3A3.8 3.8 0 0 1 6.6 5.3" fill="none" stroke="#cfcfcf" stroke-width=".8"/></svg>
<div class="b" style="left:16.1px;top:9.0px;width:22px;height:1.8px;background:#b4b4b4;border-radius:1px"></div>
<div class="b" style="left:36.2px;top:7.9px;width:4px;height:4px;background:#fff;border-radius:50%"></div>
<svg style="left:68.80000000000001px;top:7.7000000000000455px" width="10.4" height="5.8" viewBox="0 0 10.4 5.8"><path d="M5.2 0V5.8L0 2.9ZM10.4 0V5.8L5.2 2.9Z" fill="#fff"/></svg>
<svg style="left:89.39999999999998px;top:5px" width="9" height="10" viewBox="0 0 9 10"><path d="M0 0 9 5 0 10Z" fill="#fff"/></svg>
<svg style="left:108.79999999999995px;top:7.5px" width="10.4" height="5.8" viewBox="0 0 10.4 5.8"><path d="M0 0 5.2 2.9 0 5.8ZM5.2 0 10.4 2.9 5.2 5.8Z" fill="#fff"/></svg>
<svg style="left:143.10000000000002px;top:7.2000000000000455px" width="8" height="6.8" viewBox="0 0 8 6.8"><path d="M2 4.9H1.2C.8 4.9.5 4.6.5 4.2V1.2C.5.8.8.5 1.2.5H6.8C7.2.5 7.5.8 7.5 1.2V4.2C7.5 4.6 7.2 4.9 6.8 4.9H6" fill="none" stroke="#e8e8e8" stroke-width=".8"/><path d="M4 3.9 6.3 6.6H1.7Z" fill="#fff"/></svg>
<svg style="left:160.70000000000005px;top:7.5px" width="6.4" height="6.6" viewBox="0 0 6.4 6.6"><path d="M.3.3 2.6 2.6M2.7.8V2.7H.8M6.1 6.3 3.8 4M3.7 5.8V3.9H5.6" fill="none" stroke="#e4e4e4" stroke-width=".8"/></svg>
<svg style="left:177px;top:7.2000000000000455px" width="6" height="6" viewBox="0 0 6 6"><path d="M.4.4 3 3 .4 5.6M3 .4 5.6 3 3 5.6" fill="none" stroke="#bdbdbd" stroke-width=".8"/></svg>
<div class="b" style="left:14.6px;top:22.0px;width:158.4px;height:1.9px;background:#6b6e6e;border-radius:1px"></div>
<div class="b" style="left:14.6px;top:22.0px;width:126px;height:1.9px;background:#9c9c9c;border-radius:1px"></div>
<div class="b" style="left:139.9px;top:19.4px;width:1.6px;height:7px;background:#fff;border-radius:.8px"></div>
<span class="t" style="left:4.40px;top:21.20px;font-size:5.6px;color:#d8d8d8;transform:scaleX(0.8815) skewX(.05deg);">0:34</span>
<span class="t" style="left:173.60px;top:21.20px;font-size:5.6px;color:#d8d8d8;transform:scaleX(0.9366) skewX(.05deg);">0:43</span>
</div>
<div id="edge"></div>
</div>
</body>
</html>
